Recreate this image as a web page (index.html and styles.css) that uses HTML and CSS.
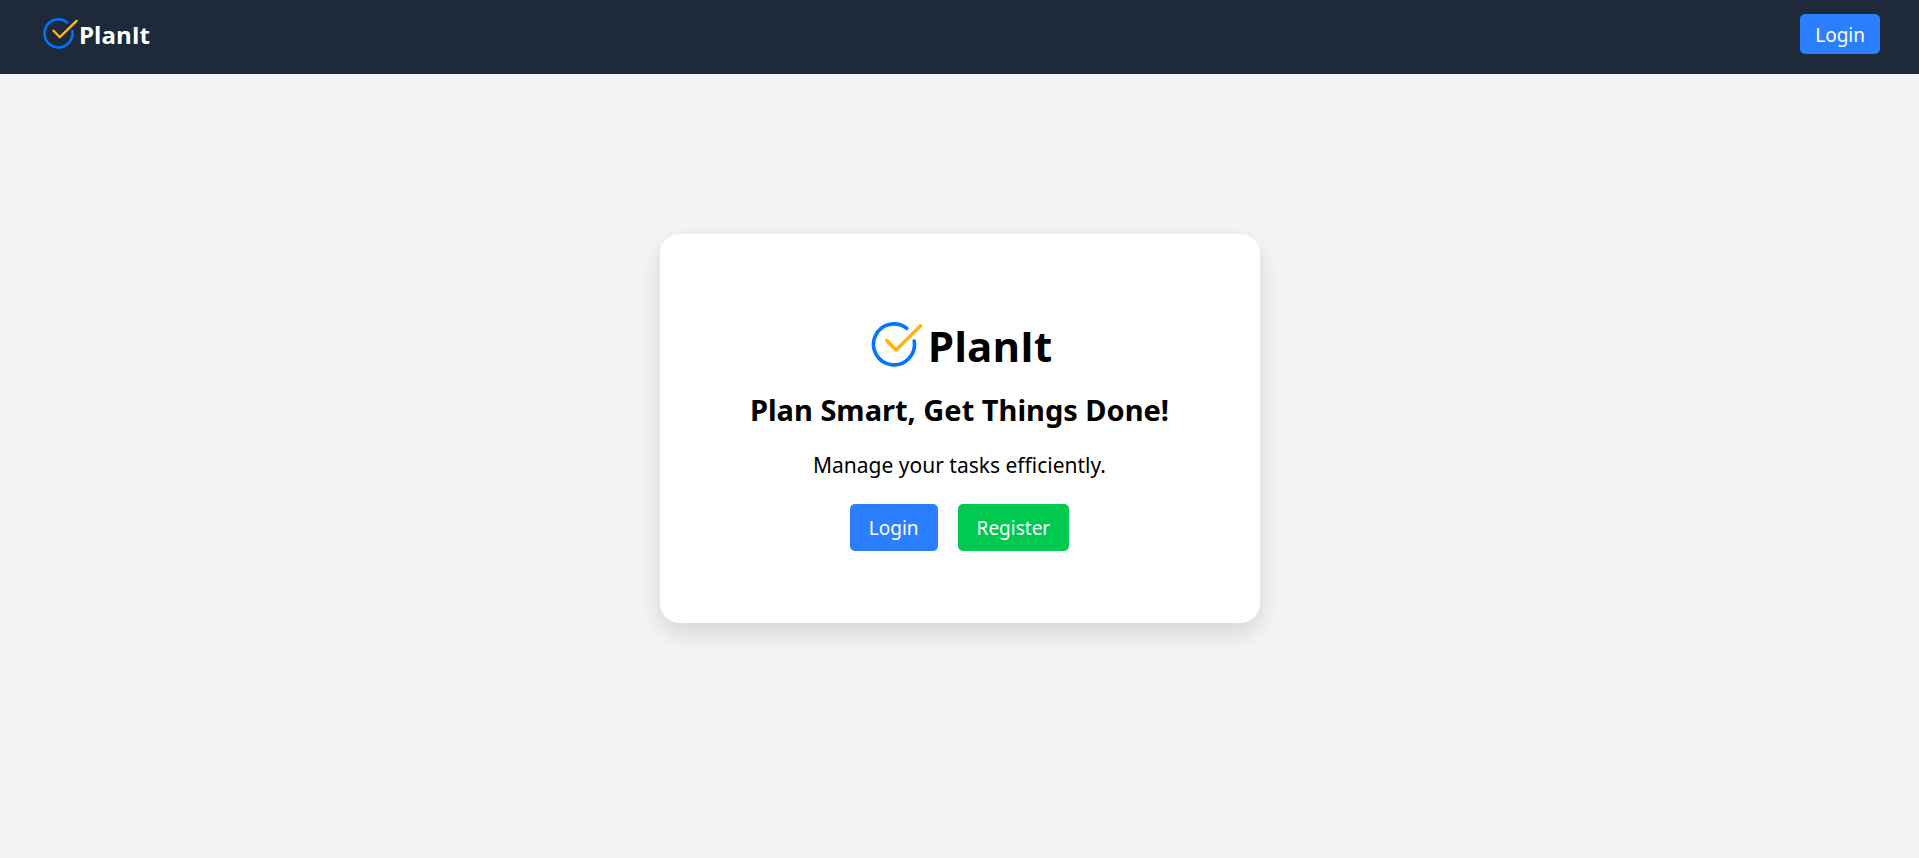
FILE: index.html
```html
<!DOCTYPE html>
<html lang="en">
<head>
<meta charset="utf-8">
<meta name="viewport" content="width=device-width, initial-scale=1">
<title>PlanIt</title>
<link rel="stylesheet" href="styles.css">
</head>
<body>
<svg class="sprite" aria-hidden="true">
  <symbol id="logo" viewBox="-5 0 57 48">
    <path d="M34.800 6.400A20.500 20.500 0 1 0 42.200 19" fill="none" stroke="#0075ff" stroke-width="3.600" stroke-linecap="round"/>
    <path d="M14.800 18.500L24 28L48.500 4" fill="none" stroke="#ffb30f" stroke-width="3.600" stroke-linecap="round" stroke-linejoin="round"/>
  </symbol>
</svg>
<header class="navbar">
  <a class="brand" href="#">
    <svg class="brand-logo" aria-hidden="true"><use href="#logo"/></svg>
    <span class="brand-name">PlanIt</span>
  </a>
  <button class="button button-small button-blue" type="button">Login</button>
</header>
<main class="page">
  <section class="card">
    <h1 class="title">
      <svg class="title-logo" aria-hidden="true"><use href="#logo"/></svg>
      <span>PlanIt</span>
    </h1>
    <h2 class="tagline">Plan Smart, Get Things Done!</h2>
    <p class="description">Manage your tasks efficiently.</p>
    <div class="actions">
      <button class="button button-blue" type="button">Login</button>
      <button class="button button-green" type="button">Register</button>
    </div>
  </section>
</main>
</body>
</html>
```
FILE: styles.css
```css
* {
  box-sizing: border-box;
  margin: 0;
}

body {
  display: flex;
  flex-direction: column;
  min-height: 100vh;
  background: #f3f4f6;
  color: #000;
  font-family: "Segoe UI", "Noto Sans", sans-serif;
}

.sprite {
  position: absolute;
  width: 0;
  height: 0;
}

.navbar {
  display: flex;
  align-items: flex-start;
  justify-content: space-between;
  padding: 14px 39px 20px 40px;
  background: #1e2939;
}

.brand,
.title {
  display: flex;
  align-items: center;
  font-family: "Segoe UI", "Open Sans", sans-serif;
  font-weight: 700;
}

.brand {
  color: #fff;
  font-size: 24px;
  line-height: 38px;
  text-decoration: none;
}

.brand-logo {
  width: 39px;
  height: 33px;
}

.brand-name {
  padding-top: 2px;
}

.button {
  padding: 9px 19px 7px;
  border: 0;
  border-radius: 5px;
  color: #fff;
  font-family: inherit;
  font-size: 19px;
  line-height: 31px;
  cursor: pointer;
}

.button-small {
  padding: 6px 15px 4px;
  line-height: 30px;
}

.button-blue {
  background: #2b7fff;
}

.button-green {
  background: #00c950;
}

.page {
  flex: 1;
  padding: 160px 20px;
}

.card {
  display: flex;
  flex-direction: column;
  align-items: center;
  max-width: 600px;
  margin: 0 auto;
  padding: 80px 40px 72px;
  border-radius: 20px;
  background: #fff;
  text-align: center;
  box-shadow: 0 10px 25px rgb(0 0 0 / 13%);
}

.title {
  gap: 4px;
  font-size: 42px;
  line-height: 64px;
}

.title-logo {
  width: 57px;
  height: 48px;
}

.tagline {
  margin-top: 12px;
  font-size: 29px;
  line-height: 40px;
}

.description {
  margin-top: 19px;
  font-size: 21px;
  line-height: 32px;
}

.actions {
  display: flex;
  gap: 20px;
  margin-top: 23px;
}
```
